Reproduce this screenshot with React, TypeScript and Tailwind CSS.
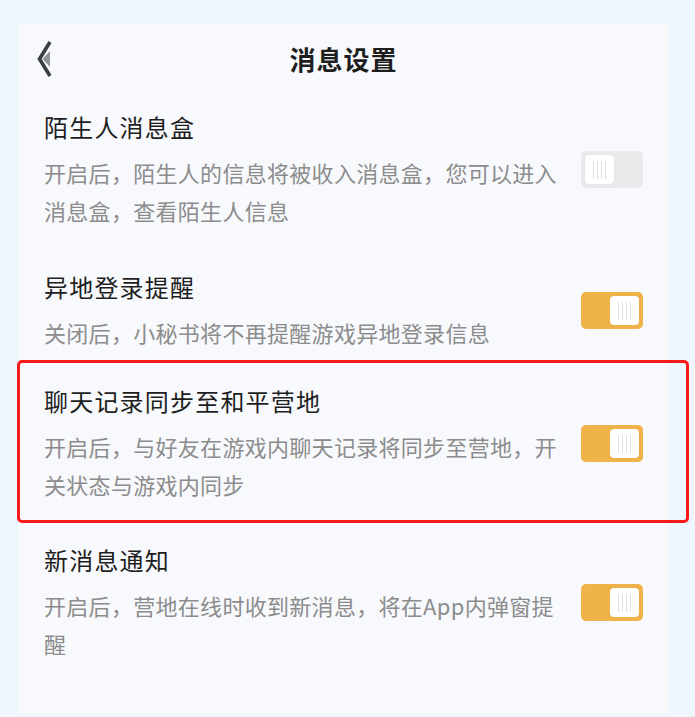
import React from "react";

function Toggle({ on }: { on: boolean }) {
  return (
    <div
      className={
        "flex h-[37px] w-[62px] shrink-0 items-center rounded-[5px] px-[4px] " +
        (on ? "justify-end bg-[#f0b34a]" : "justify-start bg-[#e9eaec]")
      }
    >
      <div className="flex h-[29px] w-[29px] items-center justify-center gap-[3px] rounded-[4px] bg-white shadow-[0_0_1px_rgba(0,0,0,0.15)]">
        <span className="h-[18px] w-px bg-[#e2e2e2]" />
        <span className="h-[18px] w-px bg-[#e2e2e2]" />
        <span className="h-[18px] w-px bg-[#e2e2e2]" />
        <span className="h-[18px] w-px bg-[#e2e2e2]" />
      </div>
    </div>
  );
}

function Item({
  title,
  desc,
  on,
  className = "",
  children,
}: {
  title: string;
  desc: string;
  on: boolean;
  className?: string;
  children?: React.ReactNode;
}) {
  return (
    <div className={"relative flex items-center gap-[17px] " + className}>
      <div className="w-[520px]">
        <div className="text-[24px] leading-[34px] tracking-[1.2px] text-[#1e1e1e]">{title}</div>
        <div className="mt-[9px] text-[22px] leading-[38px] tracking-[0.3px] text-[#8c8c8c]">{desc}</div>
      </div>
      <Toggle on={on} />
      {children}
    </div>
  );
}

export default function App() {
  return (
    <div
      className="min-h-[717px] w-[695px] bg-[#eef6fe] pt-[23px] pl-[18px]"
      style={{ fontFamily: '"Noto Sans CJK SC", "Noto Sans", sans-serif' }}
    >
      <div className="h-[690px] w-[651px] bg-[#f7f9fc] pl-[26px]">
        <div className="relative flex h-[70px] items-center">
          <svg width="18" height="38" viewBox="0 0 18 38" className="ml-[-8px] mt-[1px]">
            <polygon points="14,11 6.5,19 14,27" fill="#909398" />
            <polyline points="14,2 3.5,19 14,36" fill="none" stroke="#3a3d42" strokeWidth="3.6" strokeLinejoin="miter" />
          </svg>
          <div className="absolute left-0 right-[26px] text-center text-[26px] font-bold tracking-[1px] text-[#1e1e1e]">
            消息设置
          </div>
        </div>
        <Item
          className="mt-[17px]"
          title="陌生人消息盒"
          desc="开启后，陌生人的信息将被收入消息盒，您可以进入消息盒，查看陌生人信息"
          on={false}
        />
        <Item
          className="mt-[41px]"
          title="异地登录提醒"
          desc="关闭后，小秘书将不再提醒游戏异地登录信息"
          on={true}
        />
        <Item
          className="mt-[33px]"
          title="聊天记录同步至和平营地"
          desc="开启后，与好友在游戏内聊天记录将同步至营地，开关状态与游戏内同步"
          on={true}
        >
          <div className="pointer-events-none absolute left-[-27px] right-[-20px] top-[-24px] bottom-[-20px] rounded-[5px] border-[3px] border-[#fb1a1a]" />
        </Item>
        <Item
          className="mt-[40px]"
          title="新消息通知"
          desc="开启后，营地在线时收到新消息，将在App内弹窗提醒"
          on={true}
        />
      </div>
    </div>
  );
}
